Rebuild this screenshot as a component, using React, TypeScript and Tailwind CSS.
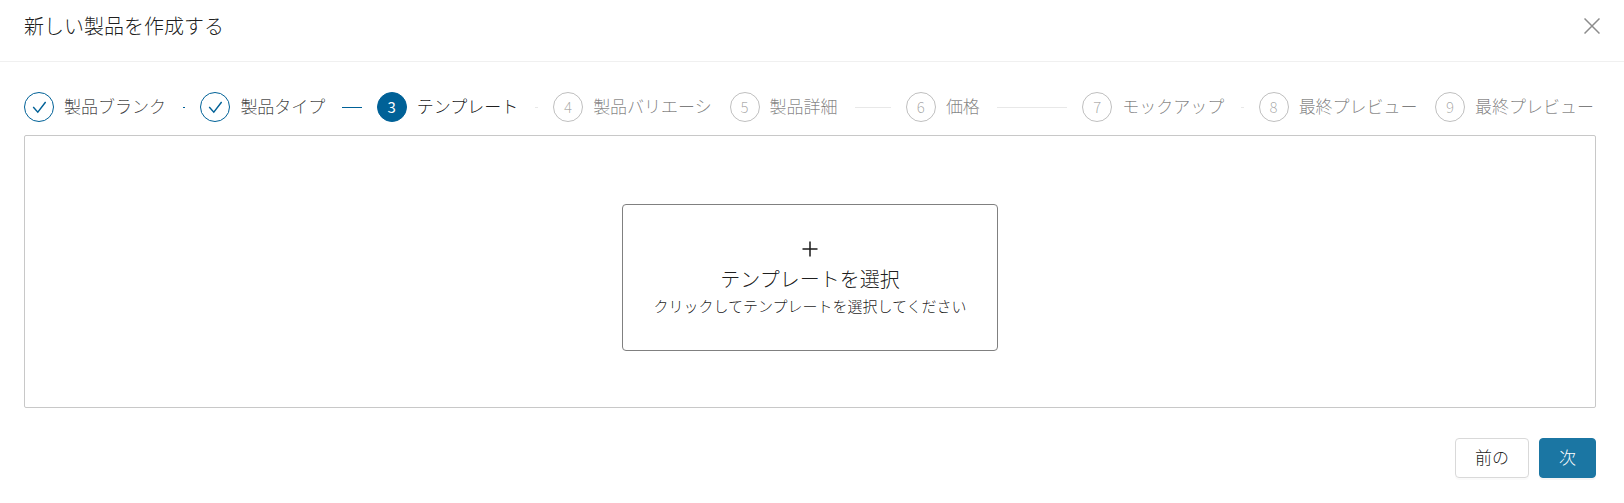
type StepState = "done" | "active" | "todo";

const steps: { title: string; state: StepState }[] = [
  { title: "製品ブランク", state: "done" },
  { title: "製品タイプ", state: "done" },
  { title: "テンプレート", state: "active" },
  { title: "製品バリエーシ", state: "todo" },
  { title: "製品詳細", state: "todo" },
  { title: "価格", state: "todo" },
  { title: "モックアップ", state: "todo" },
  { title: "最終プレビュー", state: "todo" },
  { title: "最終プレビュー", state: "todo" },
];

const circle: Record<StepState, string> = {
  done: "border-[#006197] text-[#006197]",
  active: "border-[#006197] bg-[#006197] font-normal text-white",
  todo: "border-black/25 text-black/35",
};

const label: Record<StepState, string> = {
  done: "text-black/75",
  active: "text-black/90",
  todo: "text-black/50",
};

function Check() {
  return (
    <svg viewBox="0 0 14 14" className="size-3.5" fill="none" stroke="currentColor" strokeWidth="1.4" aria-label="完了">
      <path d="M1.2 7 5.8 12.2 13.6 2" />
    </svg>
  );
}

function Step({ index }: { index: number }) {
  const { title, state } = steps[index];
  const last = index === steps.length - 1;
  return (
    <li
      aria-current={state === "active" ? "step" : undefined}
      className={last ? "flex w-[161px] flex-none items-center" : "flex min-w-0 flex-1 items-center pr-[15px]"}
    >
      <span className={`mr-2.5 flex size-[30px] flex-none items-center justify-center rounded-full border text-[15px] leading-5 ${circle[state]}`}>
        {state === "done" ? <Check /> : index + 1}
      </span>
      <span className={`flex-none whitespace-nowrap pb-0.5 text-[17px] leading-7 ${label[state]}`}>{title}</span>
      {!last && <span className={`ml-[17px] h-px flex-1 ${state === "done" ? "bg-[#006197]" : "bg-[#e8e8e8]"}`} />}
    </li>
  );
}

export default function App() {
  return (
    <div className="bg-white font-['Noto_Sans_CJK_JP',sans-serif] font-light text-black/90">
      <header className="flex items-center justify-between border-b border-[#f0f0f0] px-6 pt-3 pb-[21px]">
        <h1 className="text-xl leading-7">新しい製品を作成する</h1>
        <button type="button" aria-label="閉じる" className="flex size-4 items-center justify-center text-black/45">
          <svg viewBox="0 0 16 16" className="size-4" fill="none" stroke="currentColor" strokeWidth="1.5">
            <path d="M0.5 0.5 15.5 15.5M15.5 0.5 0.5 15.5" />
          </svg>
        </button>
      </header>

      <main className="px-6 pt-[30px] sm:pr-7">
        <ol className="flex">
          {steps.map((_, i) => (
            <Step key={i} index={i} />
          ))}
        </ol>

        <section className="mt-[13px] flex justify-center rounded-xs border border-[#c8c8c8] px-6 pt-17 pb-14">
          <button
            type="button"
            className="flex flex-col items-center rounded border border-[#808080] px-[30px] pt-9 pb-[31px]"
          >
            <svg viewBox="0 0 16 16" className="size-4" fill="none" stroke="currentColor" strokeWidth="1.5" aria-hidden="true">
              <path d="M8 0.5V15.5M0.5 8H15.5" />
            </svg>
            <span className="mt-2 text-xl leading-7">テンプレートを選択</span>
            <span className="text-[15px] leading-[26px]">クリックしてテンプレートを選択してください</span>
          </button>
        </section>

        <footer className="flex justify-end gap-2.5 pt-[30px] pb-6">
          <button type="button" className="h-10 rounded border border-[#d9d9d9] px-[19px] pb-0.5 text-[17px] shadow-[0_2px_0_rgba(0,0,0,0.02)]">
            前の
          </button>
          <button type="button" className="h-10 rounded border border-[#1b76a3] bg-[#1b76a3] px-[19px] pb-0.5 text-[17px] text-white shadow-[0_2px_0_rgba(0,0,0,0.04)]">
            次
          </button>
        </footer>
      </main>
    </div>
  );
}
